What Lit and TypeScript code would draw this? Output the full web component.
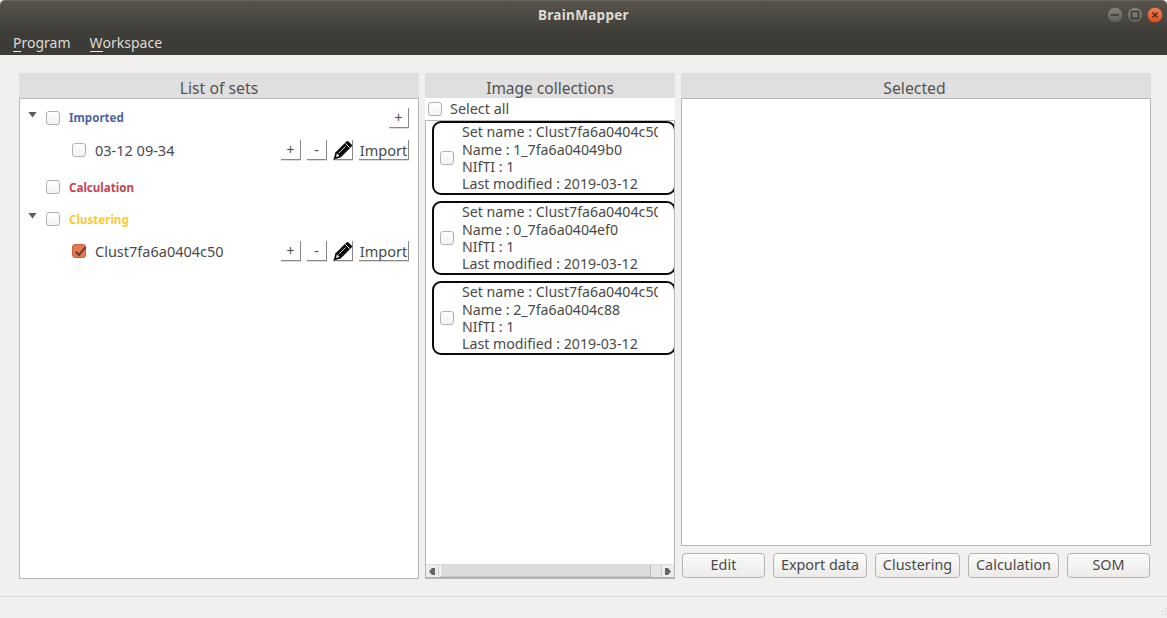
import { LitElement, html, css, svg } from "lit";
import { customElement } from "lit/decorators.js";

const pencil = svg`<svg class="pen" width="20" height="20" viewBox="0 0 20 20"><path d="M0.6 19.4 L2.4 12.4 L13.4 1.4 Q14.4 .5 15.5 1.4 L18.6 4.5 Q19.5 5.6 18.6 6.6 L7.6 17.6 Z" fill="#0a0a0a"/><path d="M3.9 13.6 L3 17 L6.4 16.1 Q5.4 14.6 3.9 13.6 Z" fill="#fff"/><path d="M12.4 3.4 L16.6 7.6" stroke="#fff" stroke-width="1" fill="none"/><path d="M5.6 13.4 L12.6 6.4" stroke="#fff" stroke-width=".8" fill="none"/></svg>`;

const cards = [
  ["1_7fa6a04049b0"],
  ["0_7fa6a0404ef0"],
  ["2_7fa6a0404c88"],
];

@customElement("app-root")
export class AppRoot extends LitElement {
  static styles = css`
    :host { display: block; width: 1167px; height: 618px; overflow: hidden; background: #f1f0ee; font-family: "Noto Sans", "Open Sans", sans-serif; font-size: 14px; color: #4a4a48; }
    .win { display: flex; flex-direction: column; height: 618px; }
    .top { height: 55px; flex: none; background: linear-gradient(#57534b 0, #4c4a44 14px, #3d3c37 34px, #3c3b37 100%); border-radius: 5px 5px 0 0; border-top: 1px solid #6a675f; box-sizing: border-box; display: flex; flex-direction: column; }
    .titlebar { height: 27px; display: flex; align-items: center; position: relative; justify-content: center; }
    .title { font-weight: 700; font-size: 13.5px; color: #dfdbd2; letter-spacing: .3px; margin-top: 1px; }
    .wbtns { position: absolute; right: 4px; top: 6px; display: flex; gap: 4px; }
    .menu { display: flex; gap: 19px; padding: 5px 0 0 13px; color: #dfdbd2; font-size: 14px; line-height: 19px; }
    .menu u { text-decoration: none; border-bottom: 1px solid #eee; display: inline-block; line-height: 14px; height: 15px; vertical-align: baseline; }
    .main { flex: 1; display: flex; gap: 6px; padding: 18px 16px 0 19px; box-sizing: border-box; }
    .col { display: flex; flex-direction: column; height: 506px; }
    .c1 { width: 400px; } .c2 { width: 250px; } .c3 { width: 470px; }
    .hdr { height: 25px; flex: none; background: #dfdfdf; text-align: center; font-size: 15.8px; line-height: 30px; color: #55534f; overflow: hidden; box-sizing: border-box; }
    .c2 .hdr { font-size: 15.5px; }
    .c3 .hdr { padding-right: 3px; }
    .tree { flex: 1; background: #fff; border: 1px solid #bab8b3; border-top: 1px solid #bdbbb6; box-sizing: border-box; padding: 0 9px 0 8px; display: flex; flex-direction: column; }
    .row { display: flex; align-items: center; height: 32px; }
    .r1 { margin-top: 3px; } .r3 { margin-top: 5px; } .r5 { height: 32px; }
    .twist { width: 9px; height: 6px; flex: none; margin-right: 9px; margin-top: -7px; clip-path: polygon(0 0, 100% 0, 50% 100%); background: #5d5c58; }
    .notw { width: 18px; flex: none; }
    .cb { width: 14px; height: 14px; flex: none; box-sizing: border-box; border: 1px solid #b2b0aa; border-radius: 3px; background: linear-gradient(#fff, #f4f3f1); }
    .lab { font-weight: 700; font-size: 11.6px; margin-left: 9px; }
    .r1 .lab { margin-bottom: 2px; }
    .blue { color: #4f659d; } .red { color: #c2444f; } .yel { color: #f9c936; }
    .child { padding-left: 44px; }
    .name { margin-left: 9px; font-size: 14.5px; color: #4a4a48; }
    .sp { flex: 1; }
    .fb { height: 20px; box-sizing: border-box; border-right: 1px solid #8a8985; border-bottom: 1px solid #8a8985; box-shadow: 0 1px 0 #dedddb; background: #fff; display: flex; align-items: center; justify-content: center; color: #4a4a48; font-size: 14px; margin-left: 6px; width: 20px; line-height: 18px; }
    .fb.wide { width: 50px; font-size: 14.5px; }
    .pen { display: block; flex: none; }
    .checked { background: #e8774f; border-color: #c4633f; }
    .checked svg { display: block; margin: 0; }
    .list { flex: 1; display: flex; flex-direction: column; background: #fff; min-height: 0; }
    .all { height: 22px; flex: none; display: flex; align-items: center; padding-left: 3px; background: #fff; }
    .all span { margin-left: 8px; margin-bottom: 2px; font-size: 14.4px; }
    .scroll { flex: 1; border: 1px solid #bab8b3; border-bottom: 2px solid #b5b3ae; box-sizing: border-box; display: flex; flex-direction: column; background: #fff; overflow: hidden; min-height: 0; }
    .cards { flex: 1; padding: 0 0 0 6px; display: flex; flex-direction: column; gap: 6px; overflow: hidden; width: 250px; box-sizing: border-box; }
    .card { height: 74px; width: 244px; flex: none; box-sizing: border-box; border: 2px solid #0a0a0a; border-radius: 9px; display: flex; align-items: center; padding-left: 6px; }
    .card .txt { margin-left: 8px; width: 196px; overflow: hidden; white-space: nowrap; font-size: 14.2px; line-height: 17.33px; color: #4a4a48; }
    .bar { height: 13px; box-sizing: border-box; flex: none; display: flex; align-items: stretch; background: #f0efed; padding: 0 1px; border-top: 1px solid #dcdbd8; }
    .ar { width: 12px; flex: none; background: #efeeec; display: flex; align-items: center; justify-content: center; border-right: 1px solid #cfcdc9; box-sizing: border-box; }
    .ar.rt { border-right: 0; border-left: 1px solid #cfcdc9; }
    .slide { width: 211px; box-sizing: border-box; margin-left: 1px; background: #dddcda; border-left: 1px solid #f8f8f7; border-right: 1px solid #bdbbb6; border-bottom: 1px solid #c4c3bf; }
    .chk { flex: 1; background: repeating-conic-gradient(#d8d8d6 0 25%, #f2f2f0 0 50%) 0 0 / 2px 2px; }
    .sel { flex: 1; background: #fff; border: 1px solid #bab8b3; box-sizing: border-box; }
    .btns { height: 33px; flex: none; display: flex; padding: 7px 1px 1px 1px; box-sizing: border-box; justify-content: space-between; }
    .btn { box-sizing: border-box; height: 25px; padding-bottom: 2px; border: 1px solid #b6b4af; border-radius: 4px; background: linear-gradient(#fbfbfa, #ecebe9); display: flex; align-items: center; justify-content: center; font-size: 14.4px; color: #4a4a48; }
    .status { height: 21px; flex: none; border-top: 1px solid #d8d6d2; display: flex; justify-content: flex-end; align-items: flex-end; }
  `;

  wbtn(kind: string) {
    const close = kind === "x";
    return svg`<svg width="16" height="16" viewBox="0 0 16 16">
      <defs><linearGradient id="g${kind}" x1="0" y1="0" x2="0" y2="1"><stop offset="0" stop-color="${close ? "#f0814f" : "#85837b"}"/><stop offset="1" stop-color="${close ? "#dc4e20" : "#5f5d56"}"/></linearGradient></defs>
      <circle cx="8" cy="8" r="7.7" fill="url(#g${kind})" stroke="${close ? "#4b3a2d" : "#3f3e39"}" stroke-width=".6"/>
      ${kind === "min" ? svg`<path d="M4 8h8" stroke="#35342f" stroke-width="1.5"/>` : ""}
      ${kind === "max" ? svg`<rect x="4.5" y="4.5" width="7" height="7" fill="none" stroke="#35342f" stroke-width="1.3"/>` : ""}
      ${close ? svg`<path d="M5.4 5.4l5.2 5.2M10.6 5.4l-5.2 5.2" stroke="#3d2c20" stroke-width="1.4"/>` : ""}
    </svg>`;
  }

  actions() {
    return html`<div class="fb">+</div><div class="fb">-</div><div class="fb">${pencil}</div><div class="fb wide">Import</div>`;
  }

  render() {
    return html`<div class="win">
      <div class="top">
        <div class="titlebar"><span class="title">BrainMapper</span><div class="wbtns">${this.wbtn("min")}${this.wbtn("max")}${this.wbtn("x")}</div></div>
        <div class="menu"><span><u>P</u>rogram</span><span><u>W</u>orkspace</span></div>
      </div>
      <div class="main">
        <div class="col c1">
          <div class="hdr">List of sets</div>
          <div class="tree">
            <div class="row r1"><div class="twist"></div><div class="cb"></div><span class="lab blue">Imported</span><div class="sp"></div><div class="fb">+</div></div>
            <div class="row child"><div class="cb"></div><span class="name">03-12 09-34</span><div class="sp"></div>${this.actions()}</div>
            <div class="row r3"><div class="notw"></div><div class="cb"></div><span class="lab red">Calculation</span></div>
            <div class="row"><div class="twist"></div><div class="cb"></div><span class="lab yel">Clustering</span></div>
            <div class="row r5 child"><div class="cb checked"><svg width="14" height="14" viewBox="0 0 14 14"><path d="M2.8 6.8 L6 10 L12.6 2.2" fill="none" stroke="#5a4238" stroke-width="2"/></svg></div><span class="name">Clust7fa6a0404c50</span><div class="sp"></div>${this.actions()}</div>
          </div>
        </div>
        <div class="col c2">
          <div class="hdr">Image collections</div>
          <div class="list">
            <div class="all"><div class="cb"></div><span>Select all</span></div>
            <div class="scroll">
              <div class="cards">
                ${cards.map(c => html`<div class="card"><div class="cb"></div><div class="txt">Set name : Clust7fa6a0404c50<br>Name : ${c[0]}<br>NIfTI : 1<br>Last modified : 2019-03-12</div></div>`)}
              </div>
              <div class="bar">
                <div class="ar"><svg width="7" height="7" viewBox="0 0 7 7"><path d="M6 0V7H3L0 3.5 3 0Z" fill="#666"/></svg></div>
                <div class="slide"></div>
                <div class="chk"></div>
                <div class="ar rt"><svg width="7" height="7" viewBox="0 0 7 7"><path d="M1 0V7H4L7 3.5 4 0Z" fill="#666"/></svg></div>
              </div>
            </div>
          </div>
        </div>
        <div class="col c3">
          <div class="hdr">Selected</div>
          <div class="sel"></div>
          <div class="btns">
            <div class="btn" style="width:83px">Edit</div>
            <div class="btn" style="width:94px">Export data</div>
            <div class="btn" style="width:85px">Clustering</div>
            <div class="btn" style="width:91px">Calculation</div>
            <div class="btn" style="width:83px">SOM</div>
          </div>
        </div>
      </div>
      <div class="status"><svg width="12" height="12" viewBox="0 0 12 12" fill="#cfcdc9"><rect x="10" y="2" width="1" height="1"/><rect x="7" y="5" width="1" height="1"/><rect x="10" y="5" width="1" height="1"/><rect x="4" y="8" width="1" height="1"/><rect x="7" y="8" width="1" height="1"/><rect x="10" y="8" width="1" height="1"/></svg></div>
    </div>`;
  }
}
